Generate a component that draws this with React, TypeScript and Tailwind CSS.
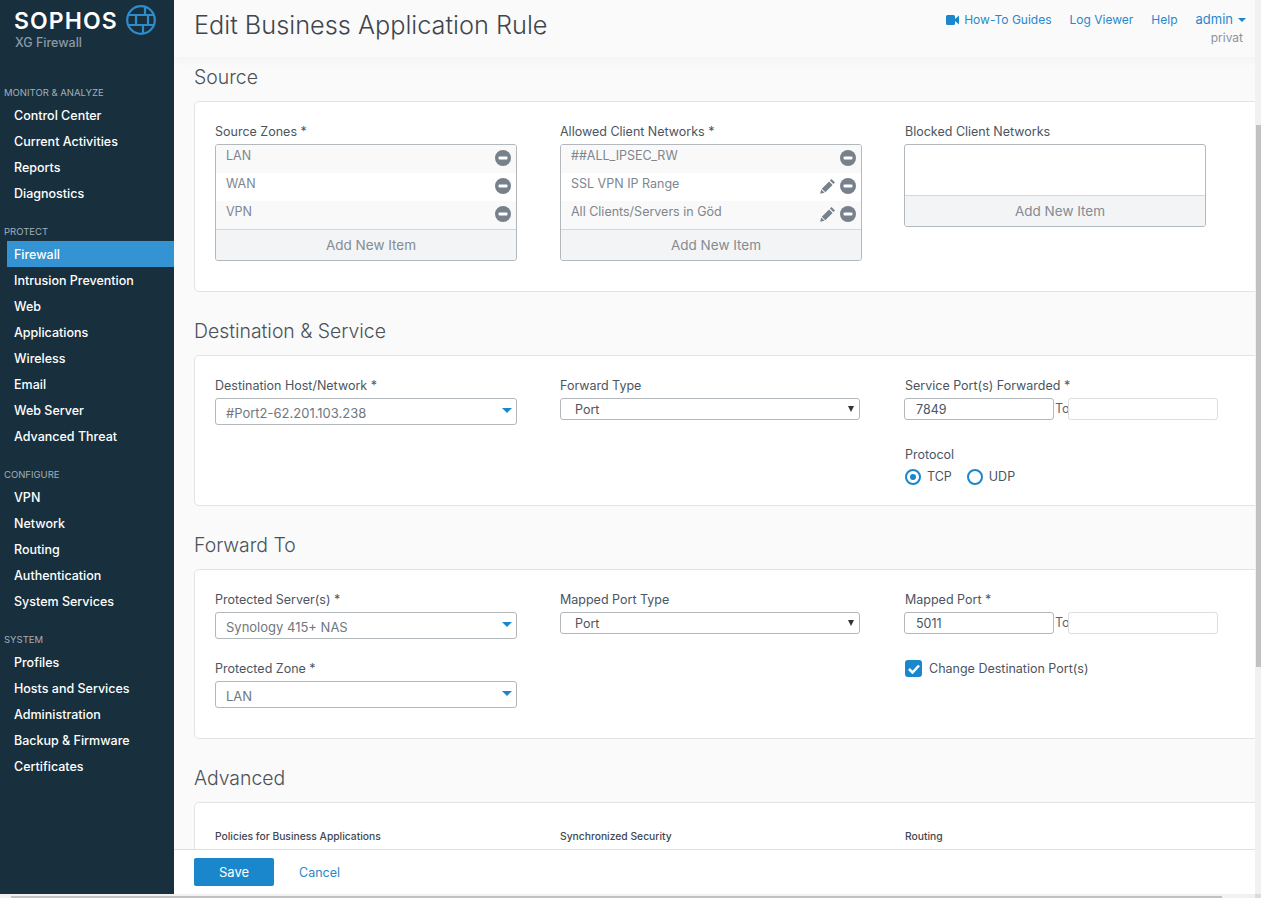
const navGroups = [
  { title: 'MONITOR & ANALYZE', items: ['Control Center', 'Current Activities', 'Reports', 'Diagnostics'] },
  { title: 'PROTECT', items: ['Firewall', 'Intrusion Prevention', 'Web', 'Applications', 'Wireless', 'Email', 'Web Server', 'Advanced Threat'] },
  { title: 'CONFIGURE', items: ['VPN', 'Network', 'Routing', 'Authentication', 'System Services'] },
  { title: 'SYSTEM', items: ['Profiles', 'Hosts and Services', 'Administration', 'Backup & Firmware', 'Certificates'] },
];

function Logo() {
  return (
    <div className="h-[81px] pl-[14px] pt-[6px]">
      <div className="flex items-center gap-[9px]">
        <span className="w-[103px] text-[23px] leading-[30px] font-semibold text-white tracking-[1.1px]">SOPHOS</span>
        <svg width="30" height="30" viewBox="0 0 30 30" fill="none" stroke="#2f8ccb" strokeWidth="2.200" className="-mt-[2px]">
          <circle cx="15" cy="15" r="13.800" />
          <path d="M2.500 10h25M2.500 20h25M19 2v8M10 10v10M22 10v10M17 20v8" />
        </svg>
      </div>
      <div className="-mt-[1px] pl-[1px] text-[12.500px] leading-[16px] font-medium text-[#8b9aa5]">XG Firewall</div>
    </div>
  );
}

function Sidebar() {
  return (
    <aside className="w-[174px] shrink-0 bg-[#182f3e]">
      <Logo />
      {navGroups.map((group) => (
        <div key={group.title} className="mb-[14px]">
          <div className="h-[21px] pl-[4px] pt-[5px] text-[9.500px] leading-[14px] text-[#a3b0b9]">{group.title}</div>
          {group.items.map((item) => (
            <div
              key={item}
              className={
                item === 'Firewall'
                  ? 'h-[26px] ml-[7px] pl-[7px] bg-[#3393d3] text-[12.500px] leading-[28px] font-medium text-white'
                  : 'h-[26px] pl-[14px] text-[12.500px] leading-[28px] font-medium text-white'
              }
            >
              {item}
            </div>
          ))}
        </div>
      ))}
    </aside>
  );
}

function Minus() {
  return (
    <svg width="16" height="16" viewBox="0 0 16 16">
      <circle cx="8" cy="8" r="8" fill="#76818b" />
      <rect x="3.500" y="6.500" width="9" height="3" rx="1" fill="#fff" />
    </svg>
  );
}

function Pencil() {
  return (
    <svg width="16" height="16" viewBox="0 0 16 16" fill="#76818b">
      <path d="M11.500 1 15 4.500l-1.600 1.600-3.500-3.500zM9.100 3.400l3.500 3.500-7.300 7.300-3.500-3.500zM1.200 11.400l3.400 3.400-4.400 1z" />
    </svg>
  );
}

function ItemList({ rows, empty }: { rows: { name: string; edit?: boolean }[]; empty?: boolean }) {
  return (
    <div className={empty ? '-ml-[1px] w-[302px] rounded-[3px] border border-[#b3b8bd] overflow-hidden' : 'w-[302px] rounded-[3px] border border-[#b3b8bd] overflow-hidden'}>
      {empty && <div className="h-[50px]" />}
      {rows.map((row, i) => (
        <div key={row.name} className={i % 2 === 0 ? 'h-[28px] flex justify-between pl-[10px] pr-[5px] bg-[#f9f9f9]' : 'h-[28px] flex justify-between pl-[10px] pr-[5px] bg-white'}>
          <span className="text-[12.500px] leading-[21px] text-[#7e868e]">{row.name}</span>
          <span className="flex items-start gap-[4px] pt-[5px]">
            {row.edit && <Pencil />}
            <Minus />
          </span>
        </div>
      ))}
      <div className="h-[31px] border-t border-[#d5d7da] bg-[#f3f4f6] pl-[10px] text-center text-[13.500px] leading-[30px] text-[#858b92]">Add New Item</div>
    </div>
  );
}

function Label({ children }: { children: string }) {
  return <div className="h-[20px] text-[12.500px] leading-[15px] text-[#4b5561]">{children}</div>;
}

function ComboBox({ value }: { value: string }) {
  return (
    <div className="w-[302px] h-[27px] flex items-center justify-between rounded-[3px] border border-[#b3b8bd] pl-[10px] pr-[4px] bg-white">
      <span className="pt-[5px] text-[13px] text-[#6f7780]">{value}</span>
      <span className="mb-[3px] border-x-[5px] border-t-[5px] border-x-transparent border-t-[#1a87cd]" />
    </div>
  );
}

function PlainSelect({ value }: { value: string }) {
  return (
    <div className="w-[300px] h-[22px] flex items-center justify-between rounded-[3px] border border-[#b3b8bd] pl-[14px] pr-[5px] bg-white">
      <span className="pt-[3px] text-[12.500px] text-[#4b5561]">{value}</span>
      <span className="border-x-[3.500px] border-t-[6px] border-x-transparent border-t-[#333]" />
    </div>
  );
}

function PortRange({ value }: { value: string }) {
  return (
    <div className="-ml-[1px] flex items-center">
      <div className="w-[150px] h-[22px] rounded-[3px] border border-[#b3b8bd] pl-[11px] text-[12.500px] leading-[22px] text-[#4b5561]">{value}</div>
      <span className="w-[14px] pl-[1px] text-[12.500px] text-[#5c6570]">To</span>
      <div className="w-[150px] h-[22px] rounded-[3px] border border-[#dcdee0]" />
    </div>
  );
}

function Section({ title, className, children }: { title: string; className: string; children: React.ReactNode }) {
  return (
    <section>
      <h2 className="h-[44px] text-[19.400px] leading-[41px] font-light text-[#4a5158] pl-[20px]">{title}</h2>
      <div className={'ml-[20px] w-[1090px] rounded-l-[5px] border border-[#e3e3e3] bg-white pl-[20px] grid grid-cols-[345px_345px_345px] ' + className}>
        {children}
      </div>
    </section>
  );
}

export default function App() {
  return (
    <div className="relative h-[898px] w-[1261px] overflow-hidden bg-[#fafafa] font-['Inter',sans-serif]">
      <div className="flex h-[894px]">
        <Sidebar />
        <main className="flex-1 min-w-0 flex flex-col">
          <header className="relative z-10 h-[57px] shrink-0 flex justify-between bg-[#fafafa] pl-[20px] pr-[15px] shadow-[0_5px_8px_rgba(30,50,80,0.025)]">
            <h1 className="text-[25.300px] leading-[50px] font-light text-[#3f464d]">Edit Business Application Rule</h1>
            <div className="pt-[12px] text-right">
              <div className="flex items-center gap-[18px] text-[12px] leading-[15px] text-[#2b87cb]">
                <span className="flex items-center gap-[5px]">
                  <svg width="13" height="10" viewBox="0 0 13 10" fill="#1a87cd">
                    <rect width="9" height="10" rx="1.500" />
                    <path d="M9 4 13 .500v9L9 6z" />
                  </svg>
                  How-To Guides
                </span>
                <span>Log Viewer</span>
                <span>Help</span>
                <span className="flex items-center gap-[5px]">
                  <span className="text-[13px]">admin</span>
                  <span className="border-x-[4px] border-t-[4px] border-x-transparent border-t-[#1a87cd]" />
                </span>
              </div>
              <div className="mt-[3px] pr-[3px] text-[12px] leading-[15px] text-[#8c939a]">privat</div>
            </div>
          </header>
          <div className="flex-1 min-h-0 overflow-hidden">
            <Section title="Source" className="h-[191px] pt-[22px]">
              <div>
                <Label>Source Zones *</Label>
                <ItemList rows={[{ name: 'LAN' }, { name: 'WAN' }, { name: 'VPN' }]} />
              </div>
              <div>
                <Label>Allowed Client Networks *</Label>
                <ItemList rows={[{ name: '##ALL_IPSEC_RW' }, { name: 'SSL VPN IP Range', edit: true }, { name: 'All Clients/Servers in Göd', edit: true }]} />
              </div>
              <div>
                <Label>Blocked Client Networks</Label>
                <ItemList rows={[]} empty />
              </div>
            </Section>
            <div className="h-[19px]" />
            <Section title="Destination & Service" className="h-[151px] pt-[22px]">
              <div>
                <Label>Destination Host/Network *</Label>
                <ComboBox value="#Port2-62.201.103.238" />
              </div>
              <div>
                <Label>Forward Type</Label>
                <PlainSelect value="Port" />
              </div>
              <div>
                <Label>Service Port(s) Forwarded *</Label>
                <PortRange value="7849" />
                <div className="mt-[27px]">
                  <Label>Protocol</Label>
                  <div className="mt-[2px] flex items-center gap-[15px] text-[12.500px] leading-[16px] text-[#4b5561]">
                    <span className="flex items-center gap-[6px]">
                      <span className="size-[16px] rounded-full border-[2px] border-[#1a87cd] flex items-center justify-center">
                        <span className="size-[6px] rounded-full bg-[#1a87cd]" />
                      </span>
                      TCP
                    </span>
                    <span className="flex items-center gap-[6px]">
                      <span className="size-[16px] rounded-full border-[2px] border-[#1a87cd]" />
                      UDP
                    </span>
                  </div>
                </div>
              </div>
            </Section>
            <div className="h-[19px]" />
            <Section title="Forward To" className="h-[170px] pt-[22px]">
              <div>
                <Label>Protected Server(s) *</Label>
                <ComboBox value="Synology 415+ NAS" />
                <div className="mt-[22px]">
                  <Label>Protected Zone *</Label>
                  <ComboBox value="LAN" />
                </div>
              </div>
              <div>
                <Label>Mapped Port Type</Label>
                <PlainSelect value="Port" />
              </div>
              <div>
                <Label>Mapped Port *</Label>
                <PortRange value="5011" />
                <div className="mt-[26px] flex items-center gap-[7px] text-[12.500px] leading-[16px] text-[#4b5561]">
                  <span className="size-[17px] rounded-[3px] bg-[#1a87cd] flex items-center justify-center">
                    <svg width="12" height="10" viewBox="0 0 12 10" fill="none" stroke="#fff" strokeWidth="2.500">
                      <path d="M1 5l3.500 3.500L11 1.500" />
                    </svg>
                  </span>
                  Change Destination Port(s)
                </div>
              </div>
            </Section>
            <div className="h-[19px]" />
            <Section title="Advanced" className="h-[120px] pt-[26px]">
              {['Policies for Business Applications', 'Synchronized Security', 'Routing'].map((t) => (
                <div key={t} className="text-[10.300px] leading-[14px] font-medium text-[#3f4852]">{t}</div>
              ))}
            </Section>
          </div>
          <footer className="relative z-10 h-[45px] shrink-0 flex items-center gap-[25px] border-t border-[#e0e0e0] bg-white pl-[20px]">
            <button className="w-[80px] h-[28px] rounded-[2px] bg-[#1a87cd] pt-[1px] text-[13px] text-white">Save</button>
            <span className="pt-[2px] text-[12.500px] text-[#2b87cb]">Cancel</span>
          </footer>
        </main>
      </div>
      {/* browser scrollbars sit over the page */}
      <div className="absolute right-0 top-0 bottom-[4px] z-20 w-[6px] bg-[#f1f1f1] pl-[1px] pt-[125px]">
        <div className="h-[542px] bg-[#c1c1c1]" />
      </div>
      <div className="absolute left-0 right-0 bottom-0 z-20 h-[4px] bg-[#f1f1f1] pt-[2px] pl-[11px]">
        <div className="w-[1211px] h-[2px] bg-[#c1c1c1]" />
      </div>
      <div className="absolute right-0 bottom-0 z-20 w-[6px] h-[4px] bg-[#dcdcdc]" />
    </div>
  );
}
